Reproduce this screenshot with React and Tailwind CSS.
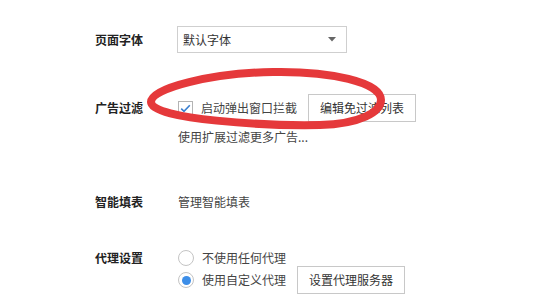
import React from "react";

function Label({ children }) {
  return (
    <div className="w-[83px] shrink-0 font-bold text-[#222] text-[12px] leading-[16px]">
      {children}
    </div>
  );
}

function Button({ children }) {
  return (
    <div className="h-[28px] px-[11px] border border-[#c8c8c8] bg-white flex items-center justify-center text-[12px] text-[#333] whitespace-nowrap">
      {children}
    </div>
  );
}

export default function App() {
  return (
    <div
      className="relative w-[540px] h-[305px] bg-white overflow-hidden text-[12px] text-[#333]"
      style={{ fontFamily: '"Noto Sans CJK SC", "Noto Sans", sans-serif' }}
    >
      <div className="pl-[95px] pt-[26px] flex flex-col">
        {/* Row 1 */}
        <div className="flex items-center h-[27px]">
          <Label>页面字体</Label>
          <div className="ml-[-1px] w-[170px] h-[27px] border border-[#cfcfcf] flex items-center justify-between pl-[5px] pr-[10px]">
            <span className="leading-[16px]">默认字体</span>
            <svg width="8" height="5" viewBox="0 0 8 5">
              <path d="M0 0 L8 0 L4 4.5 Z" fill="#666" />
            </svg>
          </div>
        </div>

        {/* Row 2 */}
        <div className="flex mt-[41px]">
          <div className="h-[28px] flex items-center">
            <Label>广告过滤</Label>
          </div>
          <div className="flex flex-col">
            <div className="flex items-center h-[28px]">
              <div className="w-[15px] h-[15px] border border-[#b4b4b4] bg-white flex items-center justify-center">
                <svg width="11" height="9" viewBox="0 0 11 9">
                  <path d="M1.2 4.6 L4 7.3 L9.8 1.3" fill="none" stroke="#3a7fd0" strokeWidth="1.6" />
                </svg>
              </div>
              <span className="ml-[8px] leading-[16px] text-[#444]">启动弹出窗口拦截</span>
              <div className="ml-[11px]">
                <Button>编辑免过滤列表</Button>
              </div>
            </div>
            <div className="mt-[7px] leading-[16px] text-[#444]">使用扩展过滤更多广告...</div>
          </div>
        </div>

        {/* Row 3 */}
        <div className="flex items-center mt-[49px] h-[16px]">
          <Label>智能填表</Label>
          <span className="leading-[16px] text-[#444]">管理智能填表</span>
        </div>

        {/* Row 4 */}
        <div className="flex mt-[40px]">
          <div className="h-[16px] flex items-center">
            <Label>代理设置</Label>
          </div>
          <div className="flex flex-col">
            <div className="flex items-center h-[16px]">
              <div className="w-[16px] h-[16px] rounded-full border border-[#c4c4c4] bg-white" />
              <span className="ml-[8px] leading-[16px] text-[#444]">不使用任何代理</span>
            </div>
            <div className="flex items-center h-[28px]">
              <div className="w-[16px] h-[16px] rounded-full border border-[#c4c4c4] bg-white flex items-center justify-center">
                <div className="w-[9px] h-[9px] rounded-full bg-[#3d8ee8]" />
              </div>
              <span className="ml-[8px] leading-[16px] text-[#444]">使用自定义代理</span>
              <div className="ml-[11px]">
                <Button>设置代理服务器</Button>
              </div>
            </div>
          </div>
        </div>
      </div>

      {/* Red hand-drawn ellipse annotation */}
      <svg className="absolute inset-0 pointer-events-none" width="540" height="305" viewBox="0 0 540 305">
        <path
          d="M151 102 C151 88, 212 73, 273 72 C330 71, 381 82, 381 100 C381 112, 360 124, 320 125 C270 126, 151 120, 151 102 Z"
          fill="none"
          stroke="#e5393b"
          strokeWidth="8"
          strokeLinejoin="round"
        />
      </svg>
    </div>
  );
}
